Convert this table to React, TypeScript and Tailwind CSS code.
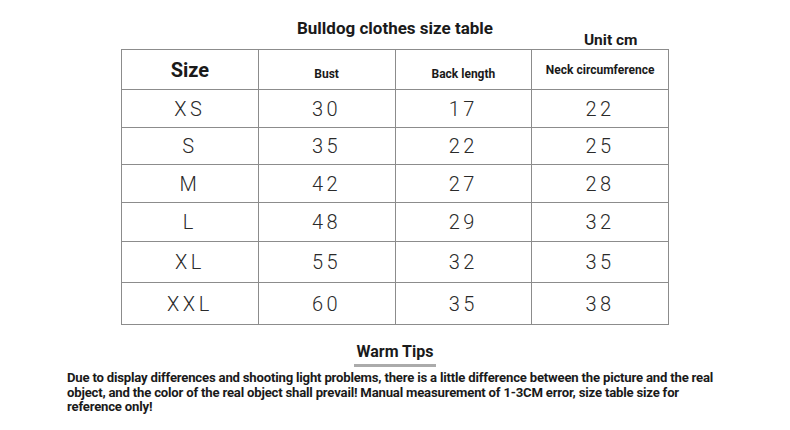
const rows = [
  ['XS', '30', '17', '22'],
  ['S', '35', '22', '25'],
  ['M', '42', '27', '28'],
  ['L', '48', '29', '32'],
  ['XL', '55', '32', '35'],
  ['XXL', '60', '35', '38'],
];

const rowHeights = ['h-[38px]', 'h-[37px]', 'h-[38px]', 'h-[39px]', 'h-[41px]', 'h-[42px]'];

export default function App() {
  return (
    <div className="w-[790px] h-[430px] bg-white text-[#1a1a1a] font-['Roboto','Liberation_Sans',sans-serif] overflow-hidden">
      {/* Title */}
      <div className="pt-[18px] text-center text-[17px] leading-[20px] font-bold">Bulldog clothes size table</div>
      <div className="w-[547px] mx-auto -mt-[8px] text-right pr-[31px] text-[15.5px] leading-[20px] font-bold">Unit cm</div>

      {/* Size table */}
      <table className="w-[548px] mx-auto -mt-[1px] table-fixed border-collapse">
        <thead>
          <tr className="h-[40px]">
            <th className="border border-[#8c8c8c] text-[20px] font-bold align-middle">Size</th>
            <th className="border border-[#8c8c8c] text-[12px] font-bold align-middle pt-[9px]">Bust</th>
            <th className="border border-[#8c8c8c] text-[12px] font-bold align-middle pt-[9px]">Back length</th>
            <th className="border border-[#8c8c8c] text-[12px] font-bold align-middle pt-[1px]">Neck circumference</th>
          </tr>
        </thead>
        <tbody>
          {rows.map((r, i) => (
            <tr key={r[0]} className={rowHeights[i]}>
              {r.map((c, j) => (
                <td
                  key={j}
                  className="border border-[#8c8c8c] text-center align-middle text-[20px] font-light tracking-[0.18em] text-[#2a2a2a]"
                >
                  {c}
                </td>
              ))}
            </tr>
          ))}
        </tbody>
      </table>

      {/* Tips */}
      <div className="mt-[17px] flex flex-col items-center">
        <div className="text-[16px] leading-[20px] font-bold">Warm Tips</div>
        <div className="w-[82px] h-[3px] bg-[#ababab] mt-[2px]" />
      </div>
      <p className="pl-[67px] mt-[4px] whitespace-nowrap text-[13.15px] leading-[14.5px] font-bold tracking-[-0.015em]">
        Due to display differences and shooting light problems, there is a little difference between the picture and the real
        <br />
        object, and the color of the real object shall prevail! Manual measurement of 1-3CM error, size table size for
        <br />
        reference only!
      </p>
    </div>
  );
}
